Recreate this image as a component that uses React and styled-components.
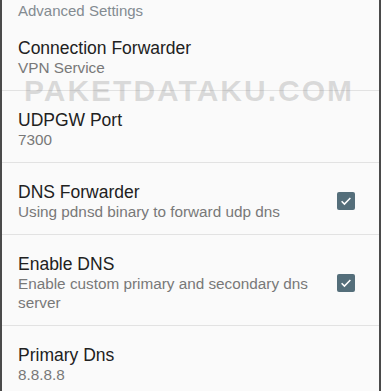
import React from 'react';
import styled, { createGlobalStyle } from 'styled-components';

const GlobalStyle = createGlobalStyle`
  html, body {
    margin: 0;
    padding: 0;
    background: #fafafa;
  }
  body {
    font-family: "Liberation Sans", Arial, sans-serif;
  }
`;

const Screen = styled.div`
  position: relative;
  width: 381px;
  height: 391px;
  box-sizing: border-box;
  overflow: hidden;
  background: #fafafa;
  border-left: 2px solid #4a4a4a;
  border-right: 2px solid #4a4a4a;
`;

const Category = styled.div`
  height: 19px;
  padding-left: 16px;
  font-size: 15px;
  line-height: 22px;
  color: #838b91;
`;

const Row = styled.div`
  display: flex;
  align-items: center;
  padding: 19px 24px 14px 16px;
  border-bottom: ${props => (props.last ? 'none' : '1px solid #e2e2e2')};
`;

const Texts = styled.div`
  flex: 1;
  min-width: 0;
`;

const Title = styled.div`
  font-size: 17.5px;
  line-height: 20px;
  color: #212121;
`;

const Summary = styled.div`
  font-size: 15.3px;
  line-height: 19px;
  margin-bottom: -1px;
  color: #787878;
  padding-right: ${props => (props.withBox ? '20px' : '0')};
`;

const CheckBox = styled.div`
  width: 18px;
  height: 18px;
  border-radius: 2px;
  background: #546e7a;
  display: flex;
  align-items: center;
  justify-content: center;
  flex-shrink: 0;
`;

const Watermark = styled.div`
  position: absolute;
  left: 22px;
  top: 76px;
  font-family: "Liberation Sans", Arial, sans-serif;
  font-weight: bold;
  font-size: 30px;
  line-height: 30px;
  letter-spacing: 2px;
  color: rgba(120, 120, 120, 0.25);
  pointer-events: none;
  white-space: nowrap;
`;

const Check = () => (
  <CheckBox>
    <svg width="14" height="14" viewBox="0 0 24 24">
      <path d="M4.5 12.5l4.8 4.8L19.5 7" fill="none" stroke="#fff" strokeWidth="2.6" />
    </svg>
  </CheckBox>
);

const prefs = [
  { title: 'Connection Forwarder', summary: 'VPN Service' },
  { title: 'UDPGW Port', summary: '7300' },
  { title: 'DNS Forwarder', summary: 'Using pdnsd binary to forward udp dns', checked: true },
  { title: 'Enable DNS', summary: 'Enable custom primary and secondary dns server', checked: true },
  { title: 'Primary Dns', summary: '8.8.8.8' },
];

export default function App() {
  return (
    <>
      <GlobalStyle />
      <Screen>
        <Category>Advanced Settings</Category>
        {prefs.map((p, i) => (
          <Row key={p.title} last={i === prefs.length - 1}>
            <Texts>
              <Title>{p.title}</Title>
              <Summary withBox={p.checked}>{p.summary}</Summary>
            </Texts>
            {p.checked && <Check />}
          </Row>
        ))}
        <Watermark>PAKETDATAKU.COM</Watermark>
      </Screen>
    </>
  );
}
